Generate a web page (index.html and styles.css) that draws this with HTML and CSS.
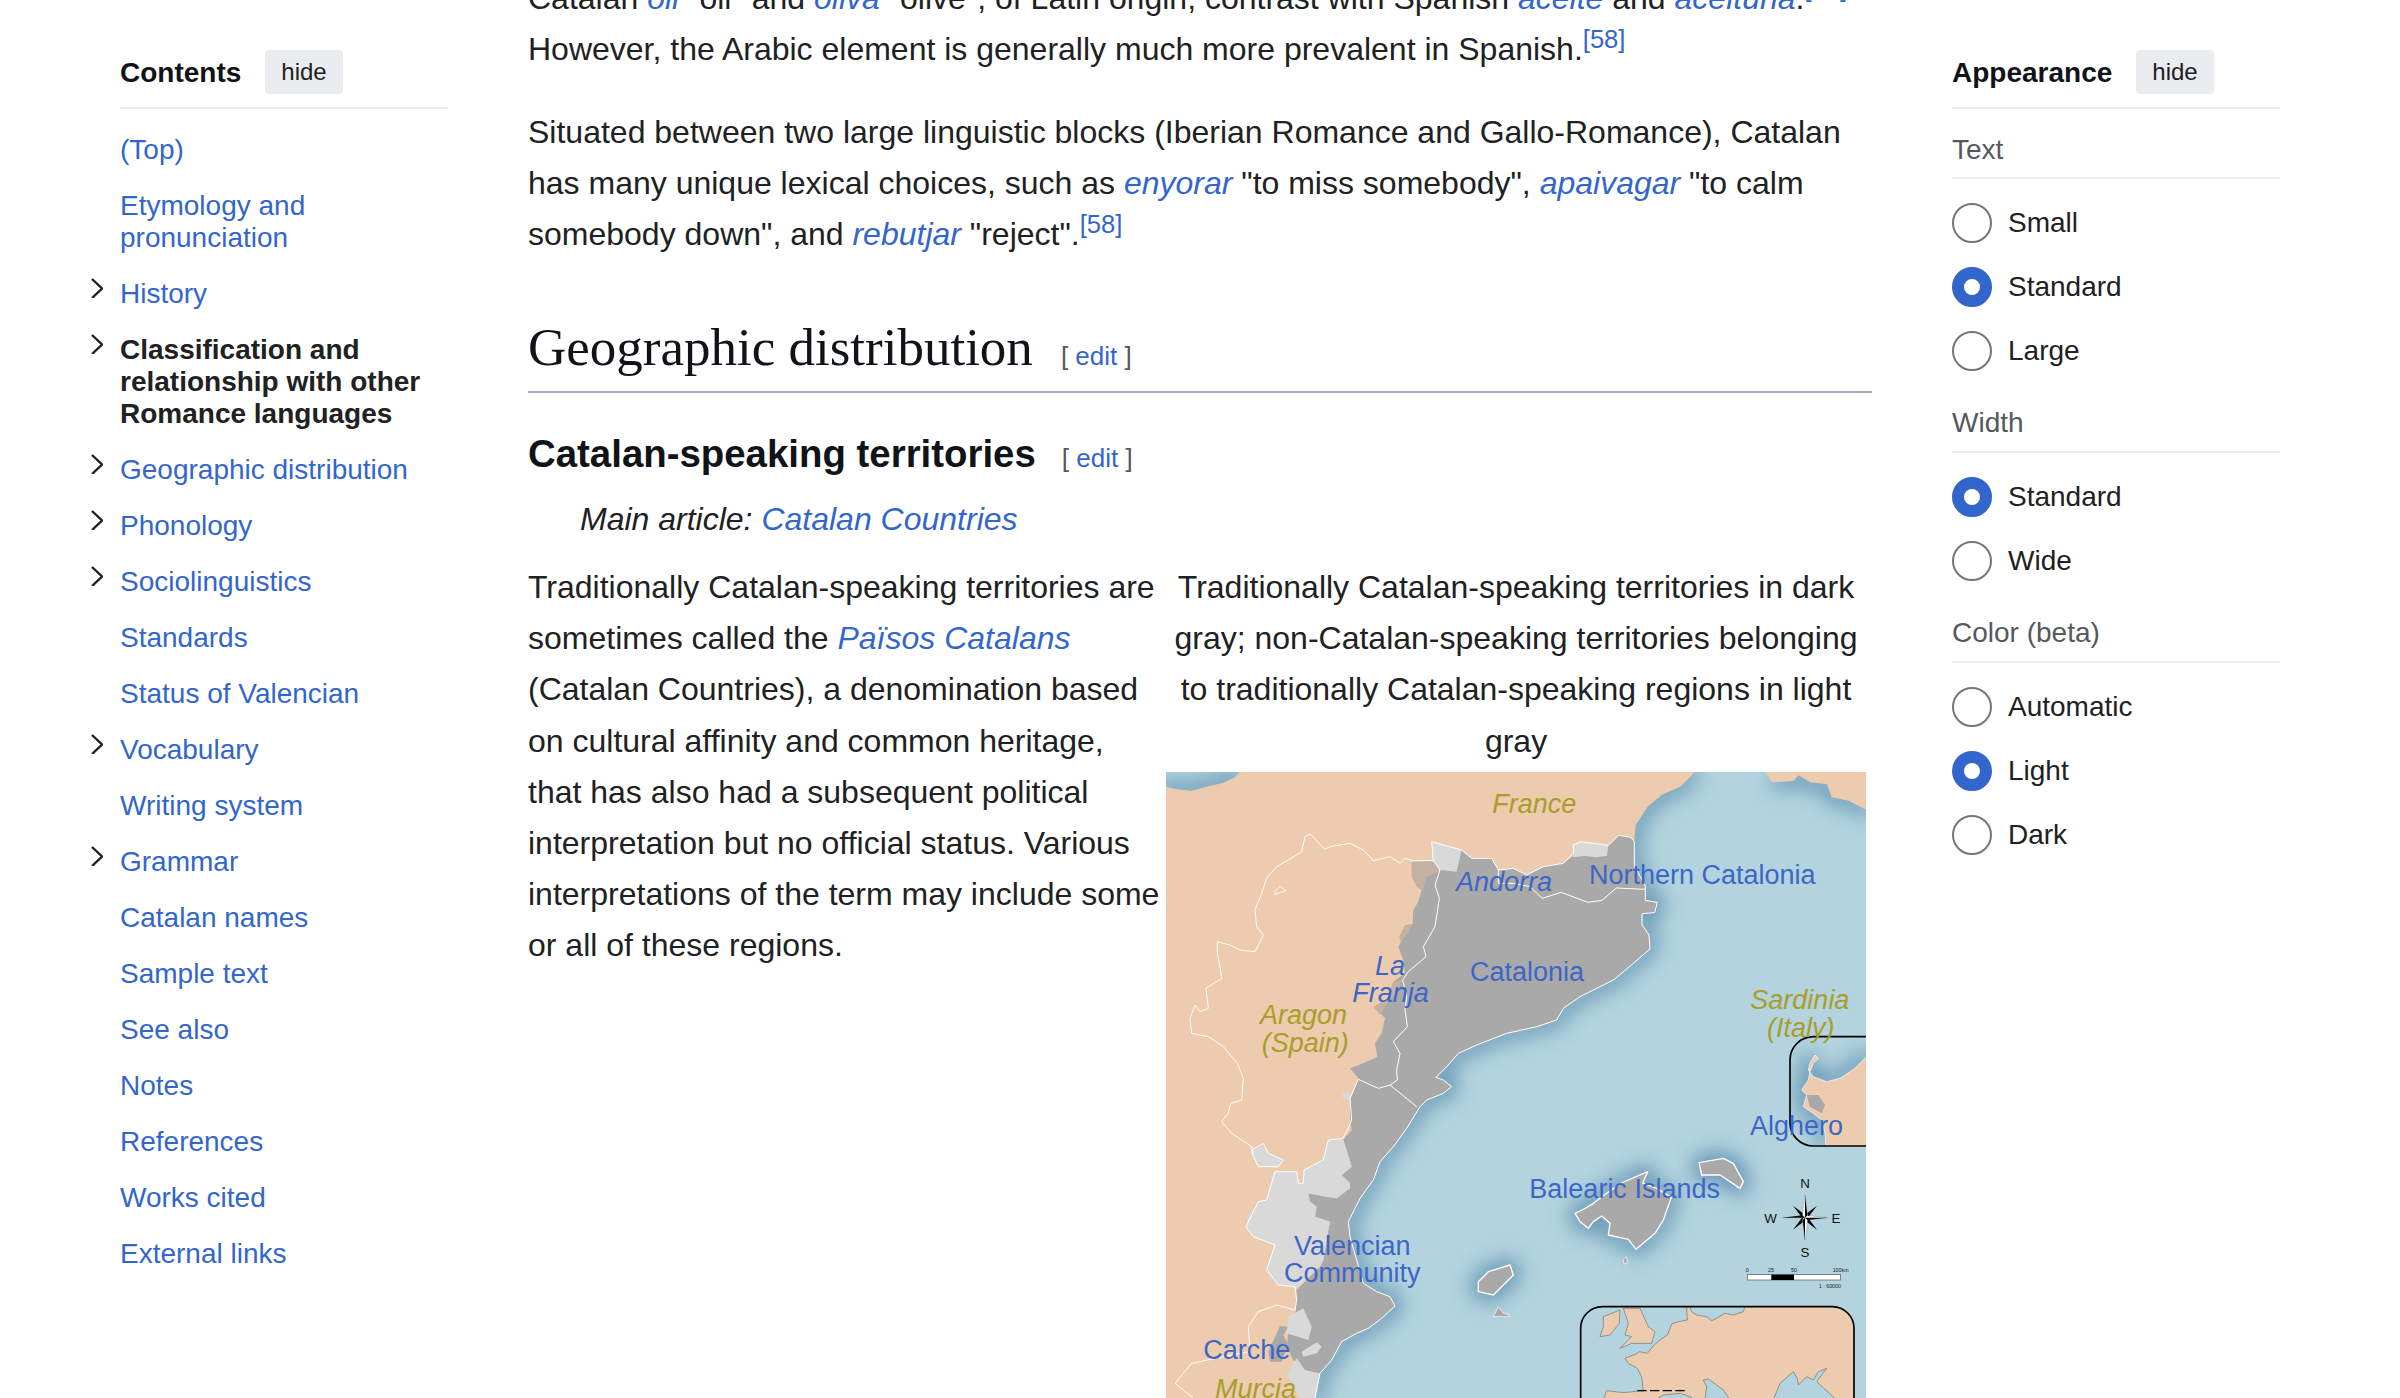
FILE: index.html
```html
<!DOCTYPE html>
<html lang="en">
<head>
<meta charset="utf-8">
<title>Catalan language</title>
<link rel="stylesheet" href="styles.css">
</head>
<body>
<div class="page">
  <nav class="side">
    <div class="side-head"><b class="side-title">Contents</b><span class="btn">hide</span></div>
    <ul class="toc">
      <li><a href="#">(Top)</a></li>
      <li><a href="#">Etymology and pronunciation</a></li>
      <li class="has-kids"><svg class="chev" viewBox="0 0 12 20"><path d="M1 1l10 9.500-10 9.500"/></svg><a href="#">History</a></li>
      <li class="has-kids current"><svg class="chev" viewBox="0 0 12 20"><path d="M1 1l10 9.500-10 9.500"/></svg><a href="#">Classification and relationship with other Romance languages</a></li>
      <li class="has-kids"><svg class="chev" viewBox="0 0 12 20"><path d="M1 1l10 9.500-10 9.500"/></svg><a href="#">Geographic distribution</a></li>
      <li class="has-kids"><svg class="chev" viewBox="0 0 12 20"><path d="M1 1l10 9.500-10 9.500"/></svg><a href="#">Phonology</a></li>
      <li class="has-kids"><svg class="chev" viewBox="0 0 12 20"><path d="M1 1l10 9.500-10 9.500"/></svg><a href="#">Sociolinguistics</a></li>
      <li><a href="#">Standards</a></li>
      <li><a href="#">Status of Valencian</a></li>
      <li class="has-kids"><svg class="chev" viewBox="0 0 12 20"><path d="M1 1l10 9.500-10 9.500"/></svg><a href="#">Vocabulary</a></li>
      <li><a href="#">Writing system</a></li>
      <li class="has-kids"><svg class="chev" viewBox="0 0 12 20"><path d="M1 1l10 9.500-10 9.500"/></svg><a href="#">Grammar</a></li>
      <li><a href="#">Catalan names</a></li>
      <li><a href="#">Sample text</a></li>
      <li><a href="#">See also</a></li>
      <li><a href="#">Notes</a></li>
      <li><a href="#">References</a></li>
      <li><a href="#">Works cited</a></li>
      <li><a href="#">External links</a></li>
    </ul>
  </nav>

  <main class="content">
    <p>Catalan <i><a href="#">oli</a></i> "oil" and <i><a href="#">oliva</a></i> "olive", of Latin origin, contrast with Spanish <i><a href="#">aceite</a></i> and <i><a href="#">aceituna</a></i>.<sup><a href="#">[58]</a></sup> However, the Arabic element is generally much more prevalent in Spanish.<sup><a href="#">[58]</a></sup></p>
    <p>Situated between two large linguistic blocks (Iberian Romance and Gallo-Romance), Catalan has many unique lexical choices, such as <i><a href="#">enyorar</a></i> "to miss somebody", <i><a href="#">apaivagar</a></i> "to calm somebody down", and <i><a href="#">rebutjar</a></i> "reject".<sup><a href="#">[58]</a></sup></p>
    <h2>Geographic distribution<span class="edit">[ <a href="#">edit</a> ]</span></h2>
    <h3>Catalan-speaking territories<span class="edit">[ <a href="#">edit</a> ]</span></h3>
    <div class="hatnote">Main article: <a href="#">Catalan Countries</a></div>
    <figure class="thumb">
      <figcaption>Traditionally Catalan-speaking territories in dark gray; non-Catalan-speaking territories belonging to traditionally Catalan-speaking regions in light gray</figcaption>
      <svg class="map" viewBox="18 6 2100 1878" role="img" aria-label="Map of Catalan-speaking territories">
        <defs>
          <filter id="coast" x="-100" y="-100" width="2400" height="2200" filterUnits="userSpaceOnUse"><feGaussianBlur stdDeviation="30"/></filter>
          <clipPath id="sardClip"><rect x="1890" y="800" width="320" height="328" rx="70"/></clipPath>
          <clipPath id="euClip"><rect x="1262" y="1610" width="820" height="400" rx="65"/></clipPath>
        </defs>
        <rect class="sea" x="18" y="6" width="2100" height="1878"/>

        <g class="shadow" filter="url(#coast)">
          <path d="M0 50L50 58 95 62 140 50 190 38 225 22 240 0M1606 0L1563 49 1506 74 1463 110 1427 165 1423 214 1423 287 1456 348 1456 391 1492 397 1484 428 1446 431 1446 464 1467 495 1470 537 1434 568 1362 629 1260 680 1210 715 1190 750 1130 770 1040 790 950 825 895 850 860 890 828 922 850 930 875 950 850 970 800 990 780 1010 740 1075 700 1130 660 1175 640 1230 600 1285 565 1355 570 1400 590 1470 610 1540 650 1565 690 1580 705 1608 665 1645 625 1675 590 1690 545 1715 515 1770 480 1810 465 1900"/>
          <path d="M1245 1330L1270 1318 1300 1300 1340 1270 1384 1239 1463 1205 1448 1239 1490 1255 1534 1282 1510 1350 1485 1390 1428 1438 1405 1408 1345 1395 1350 1360 1325 1338 1300 1355 1285 1375 1260 1355Z"/>
          <path d="M1617 1178L1690 1165 1720 1180 1750 1235 1740 1255 1680 1215 1625 1215Z"/>
          <path d="M955 1535L985 1505 1050 1485 1060 1515 1000 1575 955 1565Z"/>
          <path d="M1836 37L1901 33 1915 16 1951 37 2001 43 2015 82 2066 92 2130 125"/>
        </g>

        <path class="land" d="M18 50L50 58 95 62 140 50 190 38 225 22 240 6 1606 4 1563 49 1506 74 1463 110 1427 165 1423 214 1423 287 1456 348 1456 391 1492 397 1484 428 1446 431 1446 464 1467 495 1470 537 1434 568 1362 629 1260 680 1210 715 1190 750 1130 770 1040 790 950 825 895 850 860 890 828 922 850 930 875 950 850 970 800 990 780 1010 740 1075 700 1130 660 1175 640 1230 600 1285 565 1355 570 1400 590 1470 610 1540 650 1565 690 1580 705 1608 665 1645 625 1675 590 1690 545 1715 515 1770 480 1810 465 1884 18 1884Z"/>
        <path class="land" d="M1815 4L1836 37 1901 33 1915 16 1951 37 2001 43 2015 82 2066 92 2119 119 2119 4Z"/>

        <path class="grey" d="M905 240L935 265 995 265 1015 300 1060 295 1100 315 1150 290 1210 280 1240 257 1340 257 1345 226 1376 196 1412 202 1423 214 1423 287 1456 348 1456 391 1492 397 1484 428 1446 431 1446 464 1467 495 1470 537 1434 568 1362 629 1260 680 1210 715 1190 750 1130 770 1040 790 950 825 895 850 860 890 828 922 850 930 875 950 850 970 800 990 780 1010 740 1075 700 1130 660 1175 640 1230 600 1285 565 1355 570 1400 590 1470 610 1540 650 1565 690 1580 705 1608 665 1645 625 1675 590 1690 545 1715 515 1770 480 1810 430 1800 400 1770 380 1730 385 1690 408 1620 410 1560 480 1490 490 1470 505 1380 510 1355 465 1340 470 1310 450 1295 445 1270 500 1280 530 1285 570 1255 570 1240 545 1215 575 1190 560 1140 550 1110 575 1080 570 1040 570 990 595 925 570 895 610 880 652 860 645 820 665 790 675 745 645 710 690 680 700 635 735 610 730 570 715 530 735 490 758 460 760 420 775 395 785 360 800 320 840 300Z"/>
        <path class="grey" d="M360 1668L385 1670 370 1695 385 1725 365 1775 330 1775 325 1745Z"/>
        <path class="taupe" d="M755 275L820 272 840 300 800 320 788 362 770 350 755 320ZM735 465L755 462 745 490 722 515 718 500ZM700 635L725 630 715 660 682 700 660 735 640 710 680 690Z"/>

        <path class="light" d="M815 215L905 240 890 305 840 300 820 272Z"/>
        <path class="light" d="M1240 262L1240 225 1260 215 1345 226 1340 257 1310 262 1275 258Z"/>
        <path class="light" d="M548 968L570 965 570 990 548 985Z"/>
        <path class="light" d="M340 1205L410 1205 415 1240 432 1235 430 1200 485 1170 505 1110 550 1110 575 1190 545 1215 570 1240 570 1255 530 1285 500 1280 445 1270 450 1295 470 1310 465 1340 510 1355 505 1380 490 1470 480 1490 410 1555 355 1545 320 1500 345 1425 280 1400 258 1370 265 1335 295 1295 320 1290Z"/>
        <path class="light" d="M270 1145L310 1125 325 1150 370 1170 355 1190 295 1190Z"/>
        <path class="light" d="M385 1640L430 1615 455 1670 445 1710 380 1690Z"/>
        <path class="light" d="M425 1745L470 1717 485 1730 470 1750 430 1760Z"/>
        <path class="light" d="M380 1810L410 1765 435 1800 480 1812 465 1884 420 1884Z"/>

        <path class="grey isle" d="M1245 1330L1270 1318 1300 1300 1340 1270 1384 1239 1463 1205 1448 1239 1490 1255 1534 1282 1510 1350 1485 1390 1428 1438 1405 1408 1345 1395 1350 1360 1325 1338 1300 1355 1285 1375 1260 1355Z"/>
        <path class="grey isle" d="M1617 1178L1690 1165 1720 1180 1750 1235 1740 1255 1680 1215 1625 1215Z"/>
        <path class="grey isle" d="M955 1535L985 1505 1050 1485 1060 1515 1000 1575 955 1565Z"/>
        <path class="grey isle thin" d="M1000 1640L1015 1610 1030 1630 1050 1635 1045 1640Z"/>
        <path class="grey isle thin" d="M1390 1470L1400 1460 1402 1478 1392 1482Z"/>

        <path class="border" d="M820 272L760 272 735 265 720 280 690 260 640 272 610 240 570 220 510 230 495 238 450 192 435 200 425 245 385 270 350 290 320 325 305 370 285 420 290 470 310 495 285 545 240 540 210 525 172 515 172 550 180 590 185 625 138 655 145 715 120 725 105 705 90 745 95 790 145 800 190 830 232 880 250 925 245 990 212 1000 205 1030 185 1055 215 1090 275 1130 280 1150"/>
        <path class="border" d="M275 1140L310 1120 325 1150 370 1170 355 1190 295 1190 280 1160Z"/>
        <path class="border" d="M815 215L820 272 840 300 825 345 838 385 825 470 790 530 798 560 745 605 728 630 740 680 735 720 742 770 700 815 720 850 710 900 712 930 690 945 770 1010"/>
        <path class="border" d="M690 945L655 955 595 928 570 985 575 1050 560 1085 548 1105 505 1110 490 1170 432 1200 430 1240 415 1240 410 1205 345 1205 320 1290 295 1295 258 1370 280 1400 345 1425 320 1500 355 1545 405 1550 410 1590 405 1620 350 1605 295 1625 265 1670 270 1745 215 1755 95 1780 45 1840 100 1884"/>
        <path class="border" d="M815 215L905 240 935 265 995 265 1015 300 1060 295 1100 315 1150 290 1210 280 1240 250 1240 225 1260 215 1345 226 1376 196 1412 202"/>
        <path class="border" d="M1015 300L1015 340 1060 340 1110 350 1147 385 1204 367 1283 397 1326 391 1369 354 1456 358"/>
        <path class="border" d="M345 365L360 348 377 362 345 373Z"/>
        <path class="border" d="M1412 202L1423 214 1423 287 1456 348 1456 391 1492 397 1484 428 1446 431 1446 464 1467 495 1470 537 1434 568 1362 629 1260 680 1210 715 1190 750 1130 770 1040 790 950 825 895 850 860 890 828 922 850 930 875 950 850 970 800 990 780 1010 740 1075 700 1130 660 1175 640 1230 600 1285 565 1355 570 1400 590 1470 610 1540 650 1565 690 1580 705 1608 665 1645 625 1675 590 1690 545 1715 515 1770 480 1810 465 1884"/>

        <g clip-path="url(#sardClip)">
          <rect class="sea" x="1890" y="800" width="320" height="328"/>
          <path class="shadow" filter="url(#coast)" d="M2130 850L2085 895 2040 925 2000 935 1960 920 1940 895 1945 870 1945 930 1925 960 1940 975 1930 1010 1960 1030 1985 1050 1995 1090 1998 1130"/>
          <path class="land" d="M2125 855L2085 895 2040 925 2000 935 1960 920 1945 900 1950 880 1965 855 1975 865 1960 880 1950 905 1945 930 1925 960 1940 975 1930 1010 1960 1030 1985 1050 1995 1090 1998 1130 2125 1130Z"/>
          <path class="grey" d="M1940 975L1975 975 1995 1005 1985 1030 1950 1010Z"/>
          <path class="border thin" d="M2125 855L2085 895 2040 925 2000 935 1960 920 1945 900 1950 880 1965 855 1975 865 1960 880 1950 905 1945 930 1925 960 1940 975 1930 1010 1960 1030 1985 1050 1995 1090 1998 1130"/>
        </g>
        <rect class="box" x="1890" y="800" width="320" height="328" rx="70"/>

        <g clip-path="url(#euClip)">
          <rect class="sea" x="1262" y="1610" width="820" height="400"/>
          <g transform="translate(1200 1230)">
            <path class="eu" d="M555 378L550 395 520 405 495 400 470 415 455 422 440 410 410 405 395 395 388 378 380 385 382 420 355 425 335 432 322 465 300 480 280 497 262 520 238 515 228 522 195 535 205 550 232 565 245 590 250 632 190 638 140 632 130 660 285 660 310 645 360 640 390 650 405 660 435 660 440 620 430 600 445 597 470 615 490 630 510 660 640 660 660 610 700 575 712 595 715 615 740 590 760 600 775 575 800 565 770 605 830 660 890 660 890 378Z"/>
            <path class="eu" d="M130 410L180 390 178 430 150 465 120 470 130 440Z"/>
            <path class="eu" d="M190 385L240 385 265 440 285 455 275 490 215 490 180 505 215 470 195 465 205 430Z"/>
            <path class="dash" d="M232 632H380"/>
          </g>
        </g>
        <rect class="box" x="1262" y="1610" width="820" height="400" rx="65"/>

        <g transform="translate(1935 1343)">
          <path class="ink" d="M-36-36L-5 5 5-5ZM36-36L5 5-5-5ZM36 36L5-5-5 5ZM-36 36L-5-5 5 5Z"/>
          <path class="paper" d="M0 0L-68 0-8-6 0-68 8-6 68 0 8 6 0 68-8 6Z"/>
          <path class="ink" d="M0-68L7-7 0 0ZM68 0L7 7 0 0ZM0 68L-7 7 0 0ZM-68 0L-7-7 0 0Z"/>
        </g>
        <text class="cp" x="1935" y="1255">N</text>
        <text class="cp" x="1832" y="1358">W</text>
        <text class="cp" x="2028" y="1358">E</text>
        <text class="cp" x="1935" y="1460">S</text>
        <rect class="bar" x="1762" y="1514" width="280" height="16"/>
        <rect class="ink" x="1834" y="1514" width="68" height="16"/>
        <text class="sc" x="1762" y="1506">0</text>
        <text class="sc" x="1833" y="1506">25</text>
        <text class="sc" x="1902" y="1506">50</text>
        <text class="sc" x="2042" y="1506">100km</text>
        <text class="sc end" x="2043" y="1553">1 : 60000</text>

        <text class="lbl ol it" x="997" y="130">France</text>
        <text class="lbl it" x="888" y="362">Andorra</text>
        <text class="lbl" x="1287" y="342">Northern Catalonia</text>
        <text class="lbl it" x="645" y="615">La</text>
        <text class="lbl it" x="577" y="695">Franja</text>
        <text class="lbl" x="930" y="632">Catalonia</text>
        <text class="lbl ol it" x="300" y="762">Aragon</text>
        <text class="lbl ol it" x="305" y="845">(Spain)</text>
        <text class="lbl ol it" x="1771" y="717">Sardinia</text>
        <text class="lbl ol it" x="1821" y="800">(Italy)</text>
        <text class="lbl" x="1770" y="1095">Alghero</text>
        <text class="lbl" x="1108" y="1285">Balearic Islands</text>
        <text class="lbl" x="402" y="1455">Valencian</text>
        <text class="lbl" x="372" y="1535">Community</text>
        <text class="lbl" x="130" y="1768">Carche</text>
        <text class="lbl ol it" x="165" y="1885">Murcia</text>
      </svg>
    </figure>
    <p class="flow">Traditionally Catalan-speaking territories are sometimes called the <i><a href="#">Països Catalans</a></i> (Catalan Countries), a denomination based on cultural affinity and common heritage, that has also had a subsequent political interpretation but no official status. Various interpretations of the term may include some or all of these regions.</p>
  </main>

  <aside class="side">
    <div class="side-head"><b class="side-title">Appearance</b><span class="btn">hide</span></div>
    <section class="group">
      <div class="group-head">Text</div>
      <div class="radio"><span class="dot"></span>Small</div>
      <div class="radio"><span class="dot on"></span>Standard</div>
      <div class="radio"><span class="dot"></span>Large</div>
    </section>
    <section class="group">
      <div class="group-head">Width</div>
      <div class="radio"><span class="dot on"></span>Standard</div>
      <div class="radio"><span class="dot"></span>Wide</div>
    </section>
    <section class="group">
      <div class="group-head">Color (beta)</div>
      <div class="radio"><span class="dot"></span>Automatic</div>
      <div class="radio"><span class="dot on"></span>Light</div>
      <div class="radio"><span class="dot"></span>Dark</div>
    </section>
  </aside>
</div>
</body>
</html>
```
FILE: styles.css
```css
html, body { margin: 0; height: 1398px; overflow: hidden; background: #fff; }
body { font-family: "Liberation Sans", Arial, sans-serif; color: #202122; }
a { color: #3366cc; text-decoration: none; }

.page {
  display: grid;
  grid-template-columns: 328px 1344px 328px;
  column-gap: 80px;
  padding-left: 120px;
  align-items: start;
}

/* sidebars */
.side { padding-top: 50px; font-size: 28px; line-height: 32px; }
.side-head {
  display: flex;
  align-items: center;
  gap: 24px;
  height: 44px;
  padding-bottom: 13px;
  border-bottom: 2px solid #eaecf0;
}
.side-title { color: #101418; font-size: 28px; margin-top: 1px; }
.btn {
  background: #eaecf0;
  border-radius: 4px;
  height: 44px;
  line-height: 43px;
  padding: 0 16px;
  font-size: 24px;
  color: #202122;
}
.toc { list-style: none; margin: 13px 0 0; padding: 0; }
.toc li { position: relative; padding: 12px 0; }
.toc .current a { color: #202122; font-weight: bold; }
.chev {
  position: absolute;
  left: -29px;
  top: 12px;
  width: 12px;
  height: 20px;
  fill: none;
  stroke: #202122;
  stroke-width: 2.4;
}

.group { margin-bottom: 36px; }
.group-head {
  color: #54595d;
  margin-top: 25px;
  padding-bottom: 11px;
  border-bottom: 2px solid #eaecf0;
  margin-bottom: 24px;
}
.group + .group .group-head { margin-top: 0; padding-bottom: 12px; }
.radio { display: flex; align-items: center; gap: 16px; height: 40px; margin-bottom: 24px; }
.radio:last-child { margin-bottom: 0; }
.dot { width: 40px; height: 40px; box-sizing: border-box; border: 2px solid #72777d; border-radius: 50%; background: #fff; }
.dot.on { border: 12px solid #3366cc; }

/* article */
.content { font-size: 32px; line-height: 51.2px; margin-top: -27.5px; }
.content p { margin: 0 0 32px; }
.content sup { font-size: 25.6px; line-height: 1; vertical-align: super; }
.content h2 {
  font-family: "Liberation Serif", Georgia, serif;
  font-weight: normal;
  font-size: 53px;
  line-height: 66px;
  color: #101418;
  margin: 53.500px 0 0;
  padding-bottom: 11px;
  border-bottom: 2px solid #a2a9b1;
}
.content h3 {
  font-size: 38.4px;
  line-height: 52.800px;
  font-weight: bold;
  color: #101418;
  margin: 35px 0 0;
}
.edit {
  font-family: "Liberation Sans", Arial, sans-serif;
  font-size: 26px;
  line-height: 1;
  font-weight: normal;
  color: #54595d;
  margin-left: 28px;
}
.content h3 .edit { margin-left: 26px; }
.hatnote { font-style: italic; padding-left: 52px; margin-top: 13px; margin-bottom: 17px; }
.content p.flow { margin: 0; }

.thumb {
  float: right;
  width: 700px;
  margin: 0 6px 0 4px;
  text-align: center;
}
.thumb figcaption { margin-bottom: 5px; }
.map { display: block; width: 700px; height: 626px; }

/* map */
.sea { fill: #b3d3de; }
.land { fill: #eccbae; }
.grey { fill: #a9a9a9; }
.taupe { fill: #c4b1a1; }
.light { fill: #d9d9d9; }
.shadow { fill: none; stroke: #4f84a8; stroke-width: 40; stroke-linejoin: round; opacity: 0.85; }
.border { fill: none; stroke: #fff; stroke-width: 3; stroke-linejoin: round; }
.isle { stroke: #fff; stroke-width: 4; stroke-linejoin: round; }
.thin { stroke-width: 2; }
.box { fill: none; stroke: #000; stroke-width: 5; }
.eu { fill: #eccbae; stroke: #555; stroke-width: 1.500; stroke-linejoin: round; }
.dash { fill: none; stroke: #000; stroke-width: 4; stroke-dasharray: 28 10; }
.ink { fill: #000; }
.paper { fill: #fff; stroke: #222; stroke-width: 0.5; }
.bar { fill: #fff; stroke: #555; stroke-width: 2; }
.cp { font-size: 40px; text-anchor: middle; fill: #111; }
.sc { font-size: 16px; text-anchor: middle; fill: #222; }
.sc.end { text-anchor: end; }
.lbl { font-size: 81px; fill: #3d66c6; }
.lbl.ol { fill: #a89e2b; }
.lbl.it { font-style: italic; }
```
